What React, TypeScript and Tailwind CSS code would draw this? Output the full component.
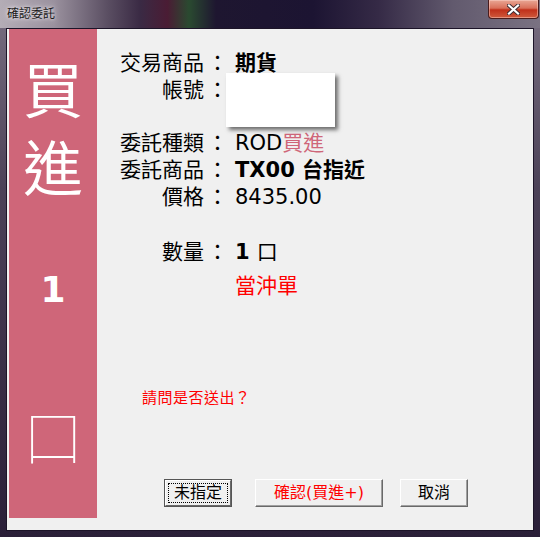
const FONT = "font-['DejaVu_Sans','Noto_Sans_CJK_TC',sans-serif]";

function CloseButton() {
  return (
    <div className="mr-px flex h-[19px] w-[51px] items-center justify-center rounded-b-[4px] border border-t-0 border-[#4a1c1c] bg-[linear-gradient(180deg,#e9a795_0%,#d9705a_45%,#c0301a_55%,#cf5a3c_100%)] shadow-[inset_0_0_0_1px_rgba(255,220,210,0.45)]">
      <svg width="13" height="11" viewBox="0 0 13 11">
        <path d="M2 1.5 L11 9.5 M11 1.5 L2 9.5" stroke="#3a2a30" strokeWidth="4" strokeLinecap="square" />
        <path d="M2 1.5 L11 9.5 M11 1.5 L2 9.5" stroke="#ffffff" strokeWidth="2.2" strokeLinecap="square" />
      </svg>
    </div>
  );
}

function Row({ label, children, className = "" }: { label?: string; children?: React.ReactNode; className?: string }) {
  return (
    <div className={`flex h-[27px] items-center whitespace-nowrap ${className}`}>
      <div className="w-[84px] shrink-0 text-right">{label}</div>
      <div className="ml-[3px] w-[21px] shrink-0">{label ? "：" : ""}</div>
      <div className="ml-[7px] flex items-center">{children}</div>
    </div>
  );
}

function ClassicButton({ children, className = "" }: { children: React.ReactNode; className?: string }) {
  return (
    <button className={`flex h-[28px] items-center justify-center border border-b-[#696969] border-l-white border-r-[#696969] border-t-white bg-[#f0f0f0] text-[16px] shadow-[inset_-1px_-1px_0_#a0a0a0] ${className}`}>
      {children}
    </button>
  );
}

export default function App() {
  return (
    <div className={`flex h-[537px] w-[540px] flex-col bg-[linear-gradient(180deg,#7a7082_0%,#4c4258_35%,#2a1f38_100%)] ${FONT}`}>
      {/* Title bar */}
      <div className="flex h-[28px] items-start justify-between bg-[linear-gradient(90deg,#b4adb6_0%,#9a919e_10%,#5a4e62_20%,#3a2a44_26%,#4a1c34_31%,#2a4a30_35%,#1e1630_40%,#1c1432_58%,#352a46_70%,#625a6e_84%,#7a7282_100%)]">
        <span className="ml-[7px] mt-[6px] text-[12px] leading-[16px] text-[#1a1a1a] [text-shadow:0_0_6px_#e8e4ea,0_0_3px_#e8e4ea]">確認委託</span>
        <CloseButton />
      </div>

      {/* Client area */}
      <div className="ml-[6px] flex h-[503px] w-[528px] border border-[#1c1428] bg-[#f0f0f0] pb-[12px] pl-[2px]">
        {/* Side badge */}
        <div className="flex w-[88px] flex-col items-center bg-[#cf6679] text-white">
          <div className="mt-[33px] text-[60px] leading-none">買</div>
          <div className="mt-[18px] text-[60px] leading-none">進</div>
          <div className="mt-[72px] text-[36px] font-bold leading-none">1</div>
          <div className="mt-[101px] text-[62px] font-thin leading-none">口</div>
        </div>

        {/* Main */}
        <div className="relative flex flex-1 flex-col pl-[23px] pt-[21px] text-[21px] text-black">
          <Row label="交易商品">
            <span className="font-bold">期貨</span>
          </Row>
          <Row label="帳號" />
          <Row label="委託種類" className="mt-[26px]">
            ROD<span className="text-[#cf6679]">買進</span>
          </Row>
          <Row label="委託商品">
            <span className="font-bold">TX00 台指近</span>
          </Row>
          <Row label="價格">8435.00</Row>
          <Row label="數量" className="mt-[28px]">
            <span className="font-bold">1</span>
            <span className="ml-[7px]">口</span>
          </Row>
          <Row className="mt-[7px]">
            <span className="text-[#ff0000]">當沖單</span>
          </Row>

          <div className="ml-[22px] mt-[88px] h-[20px] text-[15px] leading-[20px] tracking-[0.5px] text-[#ff0000]">請問是否送出？</div>

          <div className="ml-[44px] mt-[71px] flex items-center">
            <div className="h-[28px] w-[68px] border border-[#555555]">
              <div className="flex h-full w-full items-center justify-center border border-b-[#696969] border-l-white border-r-[#696969] border-t-white p-[2px]">
                <div className="flex h-full w-full items-center justify-center border border-dotted border-black text-[16px]">未指定</div>
              </div>
            </div>
            <ClassicButton className="ml-[23px] w-[128px] text-[#ff0000]">確認(買進+)</ClassicButton>
            <ClassicButton className="ml-[17px] w-[68px]">取消</ClassicButton>
          </div>

          {/* Masked account number */}
          <div className="absolute left-[129px] top-[44px] h-[54px] w-[109px] bg-white shadow-[3px_3px_4px_rgba(0,0,0,0.55)]" />
        </div>
      </div>
    </div>
  );
}
